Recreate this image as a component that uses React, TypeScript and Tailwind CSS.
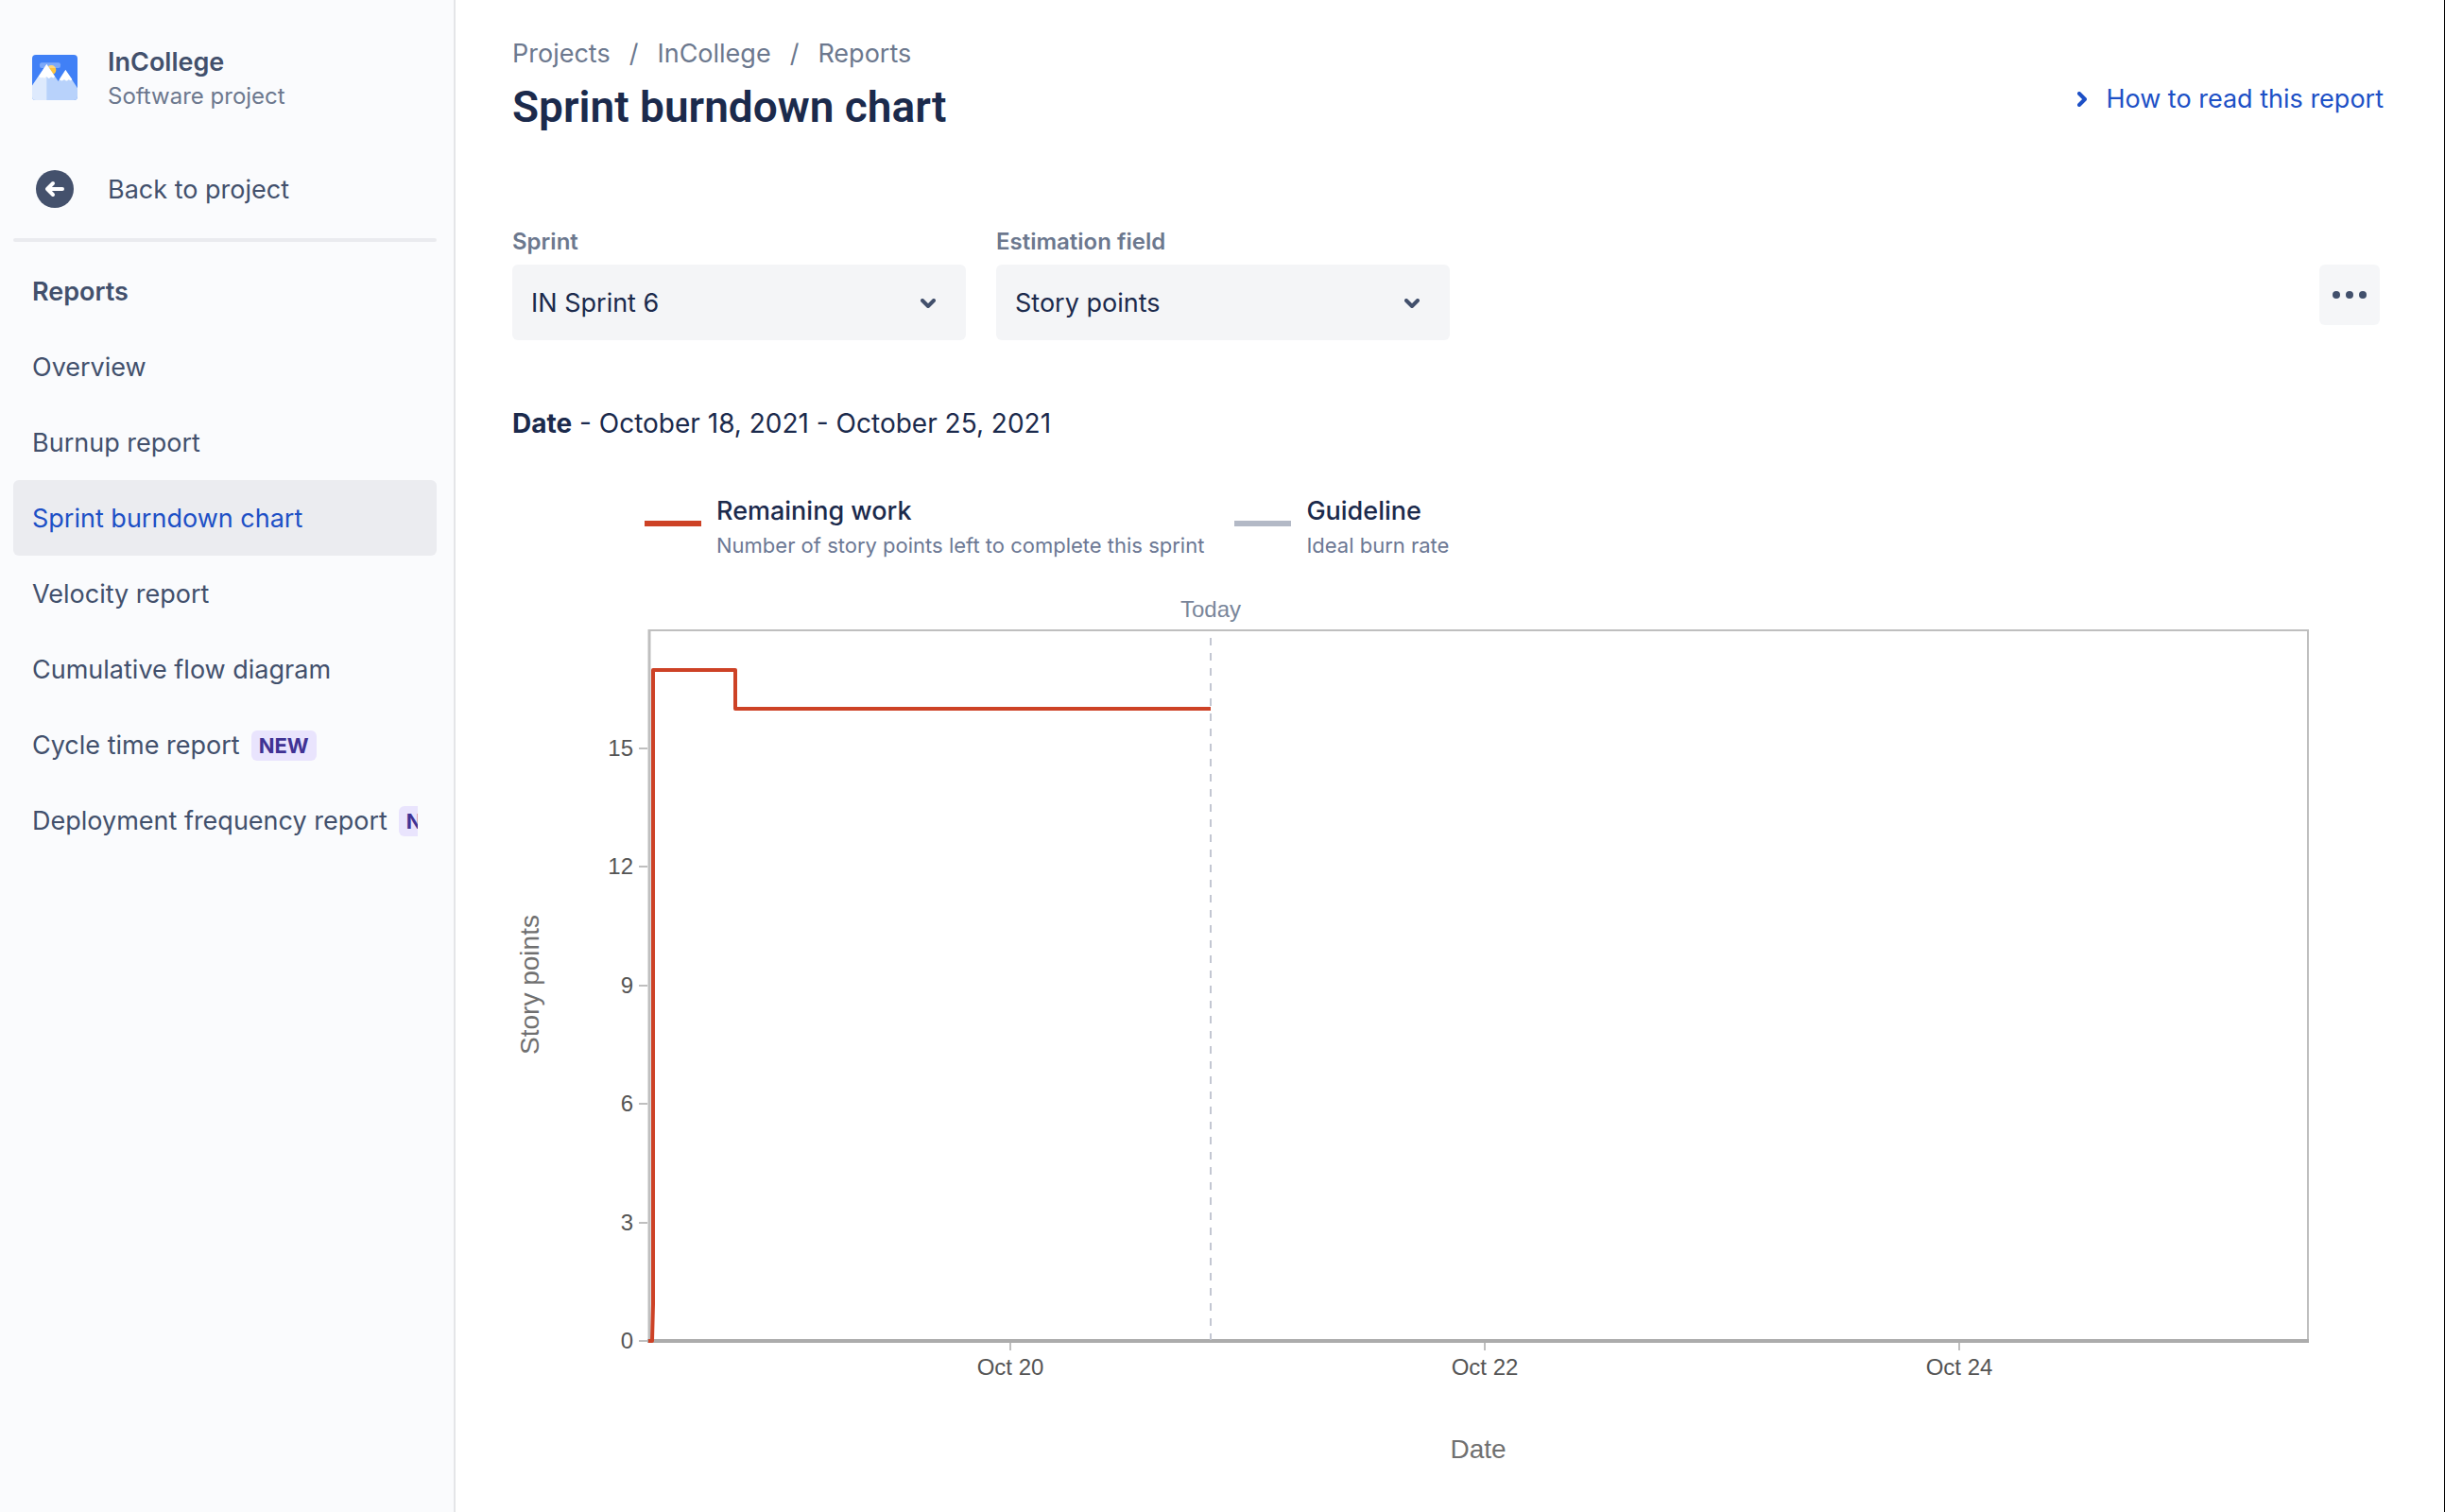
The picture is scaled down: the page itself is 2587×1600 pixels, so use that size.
import type { ReactNode } from "react";

const navItems: { label: string; active?: boolean; isNew?: boolean }[] = [
  { label: "Overview" },
  { label: "Burnup report" },
  { label: "Sprint burndown chart", active: true },
  { label: "Velocity report" },
  { label: "Cumulative flow diagram" },
  { label: "Cycle time report", isNew: true },
  { label: "Deployment frequency report", isNew: true },
];

function ProjectLogo() {
  return (
    <svg viewBox="0 0 144 144" className="size-12 shrink-0 rounded" aria-hidden="true">
      <rect width="144" height="144" fill="#4080F6" />
      <circle cx="61" cy="48" r="15" fill="#FFC53F" />
      <rect x="24" y="25" width="66" height="17" rx="6" fill="#fff" fillOpacity="0.32" />
      <path d="M46 30 L83 84 L106 48 L144 106 V144 H0 V98 Z" fill="#B8D2FB" />
      <path d="M46 30 V144 H0 V98 Z" fill="#DEEAFD" />
      <path d="M46 30 L72 68 Q69 76 64 72 Q60 69 57 73 Q53 77 49 72 Q46 68 42 72 Q38 76 34 71 Q29 76 21 69 Z" fill="#fff" />
      <path d="M106 48 L127 78 Q123 84 119 80 Q116 77 113 81 Q109 85 105 80 Q101 77 98 81 Q93 84 86 79 Z" fill="#fff" />
    </svg>
  );
}

function BackIcon() {
  return (
    <svg viewBox="0 0 40 40" className="size-10" aria-hidden="true">
      <circle cx="20" cy="20" r="20" fill="#44516C" />
      <path d="M28 20 H13 M18 14 L12 20 L18 26" fill="none" stroke="#fff" strokeWidth="4" strokeLinecap="round" strokeLinejoin="round" />
    </svg>
  );
}

function Sidebar() {
  return (
    <aside className="w-[482px] shrink-0 border-r-2 border-[#E4E5E8] bg-[#FAFBFD] pt-12 pr-[18px] pl-3.5 text-[27px] text-[#42506C]">
      <div className="flex items-start gap-8 px-5">
        <div className="pt-2.5">
          <ProjectLogo />
        </div>
        <div>
          <div className="leading-9 font-semibold">InCollege</div>
          <div className="text-[24px] leading-9 text-[#6C788E]">Software project</div>
        </div>
      </div>
      <a href="#project" className="mt-10 flex h-20 items-center gap-8 px-5">
        <span className="flex w-12 justify-center">
          <BackIcon />
        </span>
        <span className="pt-0.5">Back to project</span>
      </a>
      <hr className="mt-3 h-1 rounded-full border-0 bg-[#EAEBEF]" />
      <h2 className="mt-3 flex h-20 items-center px-5 pt-0.5 font-semibold">Reports</h2>
      <nav aria-label="Reports">
        {navItems.map((item) => (
          <a
            key={item.label}
            href="#report"
            aria-current={item.active ? "page" : undefined}
            className={
              item.active
                ? "flex h-20 items-center rounded-md bg-[#EBECF0] px-5 pt-0.5 text-[#1D50C6]"
                : "flex h-20 items-center px-5 pt-0.5"
            }
          >
            <span className="flex min-w-0 flex-1 items-center gap-3 overflow-hidden whitespace-nowrap">
              {item.label}
              {item.isNew && (
                <span className="rounded-md bg-[#E9E4FD] px-2 text-[22px] leading-8 font-bold text-[#403294]">NEW</span>
              )}
            </span>
          </a>
        ))}
      </nav>
    </aside>
  );
}

function Picker({ id, label, value }: { id: string; label: string; value: string }) {
  return (
    <div className="w-[480px]">
      <label htmlFor={id} className="block text-[24px] leading-8 font-semibold text-[#6C788E]">
        {label}
      </label>
      <div className="relative mt-2">
        <select id={id} className="h-20 w-full appearance-none rounded-md bg-[#F4F5F7] pt-0.5 pr-16 pl-5 text-[27px] text-[#1B2A4C]">
          <option>{value}</option>
        </select>
        <svg viewBox="0 0 16 10" className="pointer-events-none absolute top-9 right-8 h-2.5 w-4" aria-hidden="true">
          <path d="M2 2 L8 8 L14 2" fill="none" stroke="#42506C" strokeWidth="4" strokeLinecap="round" strokeLinejoin="round" />
        </svg>
      </div>
    </div>
  );
}

function LegendItem({ title, note, swatch }: { title: string; note: string; swatch: ReactNode }) {
  return (
    <div className="flex items-start gap-4">
      {swatch}
      <div>
        <div className="text-[27px] leading-9 font-medium text-[#1B2A4C]">{title}</div>
        <div className="text-[22px] leading-9 text-[#6C7894]">{note}</div>
      </div>
    </div>
  );
}

const yTicks = [0, 3, 6, 9, 12, 15];
const xTicks = [
  { x: 527, label: "Oct 20" },
  { x: 1029, label: "Oct 22" },
  { x: 1531, label: "Oct 24" },
];
const yOf = (points: number) => 819 - Math.round(points * 41.8);

function BurndownChart() {
  return (
    <svg
      viewBox="0 0 1976 980"
      className="mt-[5px] block h-auto w-full font-['Liberation_Sans',sans-serif] text-[24px]"
      role="img"
      aria-label="Sprint burndown chart"
    >
      <g stroke="#BFBFBF" strokeWidth="2" fill="none">
        <path d="M144 67 H1900 V819" />
        {yTicks.map((v) => (
          <path key={v} d={`M134 ${yOf(v)} H143`} />
        ))}
        {xTicks.map((t) => (
          <path key={t.x} d={`M${t.x} 821 V829`} />
        ))}
      </g>
      <path d="M145 66 V819" stroke="#BFBFBF" strokeWidth="3" />
      <path d="M143 819 H1901" stroke="#ACACAC" strokeWidth="4" />
      <path d="M739 75 V818" stroke="#C3C7D2" strokeWidth="2" strokeDasharray="8 8" />
      <path d="M144 819 H148 L149 780 V109 H236 V150 H739" fill="none" stroke="#CD4226" strokeWidth="4" strokeLinejoin="round" />
      <g fill="#555">
        {yTicks.map((v) => (
          <text key={v} x="128" y={yOf(v) + 8} textAnchor="end">
            {v}
          </text>
        ))}
        {xTicks.map((t) => (
          <text key={t.x} x={t.x} y="855" textAnchor="middle">
            {t.label}
          </text>
        ))}
      </g>
      <text x="739" y="53" textAnchor="middle" fill="#7A869A">
        Today
      </text>
      <g fill="#707070" className="text-[28px]">
        <text x="1022" y="943" textAnchor="middle">
          Date
        </text>
        <text transform="translate(28 442) rotate(-90)" textAnchor="middle">
          Story points
        </text>
      </g>
    </svg>
  );
}

export default function App() {
  return (
    <div className="flex min-h-screen bg-white font-[Inter,sans-serif]">
      <Sidebar />
      <main className="min-w-0 flex-1 border-r border-black pt-[41px] pr-[68px] pl-[60px] text-[#1B2A4C]">
        <header className="-mr-1 flex items-start justify-between">
          <div>
            <nav aria-label="Breadcrumb" className="flex gap-5 text-[27px] leading-8 text-[#6C788E]">
              <a href="#projects">Projects</a>
              <span>/</span>
              <a href="#project">InCollege</a>
              <span>/</span>
              <a href="#reports">Reports</a>
            </nav>
            <h1 className="mt-3 font-[Roboto,sans-serif] text-[46px] leading-14 font-semibold">Sprint burndown chart</h1>
          </div>
          <button type="button" className="mt-12 flex items-center gap-5 text-[27px] leading-8 text-[#1D50C6]">
            <svg viewBox="0 0 10 16" className="h-4 w-2.5" aria-hidden="true">
              <path d="M2 2 L8 8 L2 14" fill="none" stroke="currentColor" strokeWidth="4" strokeLinecap="round" strokeLinejoin="round" />
            </svg>
            How to read this report
          </button>
        </header>

        <div className="mt-[99px] flex items-start gap-8">
          <Picker id="sprint" label="Sprint" value="IN Sprint 6" />
          <Picker id="estimation" label="Estimation field" value="Story points" />
          <button
            type="button"
            aria-label="More actions"
            className="mt-10 ml-auto flex size-16 items-center justify-center gap-1.5 rounded-md bg-[#F5F6F8]"
          >
            <span className="size-2 rounded-full bg-[#42506C]" />
            <span className="size-2 rounded-full bg-[#42506C]" />
            <span className="size-2 rounded-full bg-[#42506C]" />
          </button>
        </div>

        <p className="mt-[68px] text-[28px] leading-10">
          <strong className="font-bold">Date</strong> - October 18, 2021 - October 25, 2021
        </p>

        <div className="mt-[55px] ml-[140px] flex gap-8">
          <LegendItem
            title="Remaining work"
            note="Number of story points left to complete this sprint"
            swatch={<span className="mt-7 h-1.5 w-[60px] bg-[#CD4226]" />}
          />
          <LegendItem
            title="Guideline"
            note="Ideal burn rate"
            swatch={<span className="mt-7 h-1.5 w-[60px] bg-[#B3B9C6]" />}
          />
        </div>

        <BurndownChart />
      </main>
    </div>
  );
}
